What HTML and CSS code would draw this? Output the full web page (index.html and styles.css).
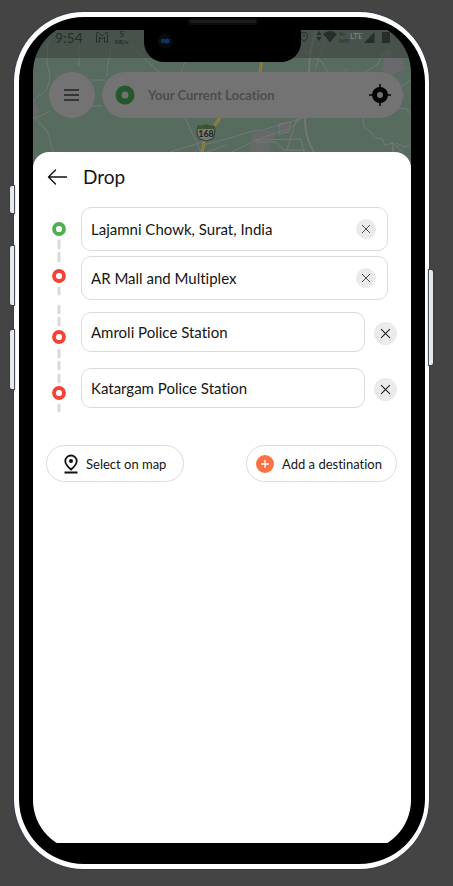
FILE: index.html
```html
<!DOCTYPE html>
<html lang="en">
<head>
<meta charset="utf-8">
<meta name="viewport" content="width=device-width, initial-scale=1">
<title>Drop</title>
<link rel="stylesheet" href="styles.css">
</head>
<body>
<div class="phone">
  <span class="key key-mute"></span>
  <span class="key key-up"></span>
  <span class="key key-down"></span>
  <span class="key key-power"></span>
  <div class="notch">
    <span class="speaker"></span>
    <svg class="camera" viewBox="0 0 16 16" aria-hidden="true"><circle cx="8" cy="8" r="7.5" fill="#080a0c"/><circle cx="6" cy="8" r="2.500" fill="#0d3446"/><circle cx="10" cy="8" r="2.500" fill="#15307a"/></svg>
  </div>
  <main class="screen">
    <div class="view">
      <svg class="map" viewBox="33 30 378 140" preserveAspectRatio="xMidYMin slice" aria-hidden="true">
        <rect x="0" y="30" width="453" height="140" fill="#586b5f"/>
        <g fill="#67696a">
          <path d="M33 98l5 8 2 5-4 5-3-1zM252 134l8-3 11-1 5-1-2 9-4 6-2 8h-17zM341 71l5-4 3 4zM384 52l4-4 7 9 7 1 3 12-11 4-5 5-7-10zM279 123l6-1 5 2-1 9-8-1zM400 90l6 4-3 6-5-2z"/>
        </g>
        <g fill="none" stroke="#737875" stroke-width="1">
          <path d="M79 45v21M50 40c-5 7-1 11-3 18-1 9 6 17 1 27-1 10-9 8-15 16M33 116l13 14c5 6 3 13 8 22M33 118c8-1 10-4 17-7M111 44c0 10-5 22-4 32M120 35l40 38M92 80h13M90 106h12M185 62l-4 10M185 118l16 34M203 145l23-6M170 152l42-13M207 152l20-7"/>
          <path d="M226 139c14-3 24-9 37-9l40-12M232 152l24-12 35-12 10-10M256 140l45-1 3 13M279 124v10l10-2 2-10zM297 118l-10 32M304 50l18 12 6 10M363 118l1 9 8 6 2 5 8 1 3 6 8-2v9M403 152l-11-10 1 10M411 145l-7 2-8-4M365 72l13-8 5-10 8-4M411 80l-9 6M396 100l3 9 7-1 5 7M255 142h20l9 8h22"/>
        </g>
        <path d="M316 31l-5 17c-2 10-1 16-2 24M305 118c0 14 2 22 9 34" fill="none" stroke="#737675" stroke-width="2"/>
        <path d="M326 36l-11 34" fill="none" stroke="#737675"/>
        <path d="M262 60l-2 12M220 118l-15 20-3 14" fill="none" stroke="#8c834f" stroke-width="3"/>
        <path d="M262 60l-2 12M220 118l-15 20-3 14" fill="none" stroke="#8f701f" stroke-width="1"/>
        <path d="M198 126q4 1 8-1 4 2 8 1l1 4q-1 9-3 9l-6 2-6-2q-3-1-3-9z" fill="#777a75" stroke="#30382c"/>
        <path d="M198 126q4 1 8-1 4 2 8 1l1 3h-18z" fill="#3a582b"/>
        <text x="206" y="137" class="shield">168</text>
      </svg>
      <header class="status">
        <span class="clock">9:54</span>
        <svg class="mail" viewBox="0 0 14 12" aria-hidden="true"><path d="M1.500 11V2.500Q1.500 0 3.500 2L7 5l3.500-3q2-2 2 .500V11H9.500V6L7 8 4.500 6v5z" fill="none" stroke="currentColor"/></svg>
        <span class="rate"><b>5</b><small>KB/s</small></span>
        <svg class="signals" viewBox="301 31 90 14" aria-hidden="true">
          <g fill="#272e29">
            <path d="M304 32a3.500 3.500 0 0 1 3.500 3.500q0 3-3.500 6.500-3.500-3.500-3.500-6.500a3.500 3.500 0 0 1 3.500-3.500z" fill="none" stroke="#272e29"/><circle cx="304" cy="35.500" r="1"/>
            <path d="M319 31l2.500 4h-5zM319 41l2.500-4h-5z"/>
            <path d="M323 34q7-6 14 0l-7 8.500z"/>
            <path d="M364 43h10.500V32z"/>
            <path d="M382 32h8v11h-8z"/>
          </g>
          <g fill="#303832"><text x="339" y="36" class="vo">Vo</text><text x="339" y="43" class="vo">WiFi</text></g>
          <text x="350" y="39" class="lte">LTE</text>
        </svg>
      </header>
      <div class="search-row">
        <button class="menu" type="button" aria-label="Menu"><svg viewBox="0 0 16 12" aria-hidden="true"><path d="M0 1h15M0 6h15M0 11h15" stroke="#222" stroke-width="1.500"/></svg></button>
        <div class="search">
          <svg class="origin" viewBox="0 0 20 20" aria-hidden="true"><circle cx="10" cy="10" r="6.500" fill="none" stroke="#23582a" stroke-width="6"/></svg>
          <input class="where" type="text" placeholder="Your Current Location" aria-label="Your Current Location">
          <button class="locate" type="button" aria-label="Use my location"><svg viewBox="0 0 22 22" aria-hidden="true"><circle cx="11" cy="11" r="5.500" fill="none" stroke="#050505" stroke-width="5"/><path d="M11 0v4M11 18v4M0 11h4M18 11h4" stroke="#050505" stroke-width="1.500"/></svg></button>
        </div>
      </div>
      <section class="sheet">
        <div class="title">
          <button class="back" type="button" aria-label="Back"><svg viewBox="0 0 20 16" aria-hidden="true"><path d="M19 8H1M8 1L1 8l7 7" fill="none" stroke="#111" stroke-width="1.400" stroke-linecap="round" stroke-linejoin="round"/></svg></button>
          <h1>Drop</h1>
        </div>
        <div class="route">
          <svg class="track" viewBox="0 0 14 206" aria-hidden="true">
            <path d="M7 34v7M7 46v8M7 81v6M7 99v7M7 111v7M7 143v7M7 155v7M7 168v7M7 198v6" stroke="#dadada" stroke-width="3" stroke-linecap="round"/>
            <g fill="none" stroke-width="3.800"><circle cx="7" cy="22" r="5" stroke="#4caf50"/><g stroke="#f44336"><circle cx="7" cy="69" r="5"/><circle cx="7" cy="130" r="5"/><circle cx="7" cy="186" r="5"/></g></g>
          </svg>
          <div class="stops">
            <div class="stop boxed"><input type="text" value="Lajamni Chowk, Surat, India" aria-label="Pickup"><button class="clear" type="button" aria-label="Clear pickup"><svg viewBox="0 0 10 10" aria-hidden="true"><path d="M1 1l8 8M9 1l-8 8" stroke="#47505f"/></svg></button></div>
            <div class="stop boxed"><input type="text" value="AR Mall and Multiplex" aria-label="First stop"><button class="clear" type="button" aria-label="Clear first stop"><svg viewBox="0 0 10 10" aria-hidden="true"><path d="M1 1l8 8M9 1l-8 8" stroke="#47505f"/></svg></button></div>
            <div class="stop extra"><input type="text" value="Amroli Police Station" aria-label="Second stop"><button class="remove" type="button" aria-label="Remove second stop"><svg viewBox="0 0 10 10" aria-hidden="true"><path d="M1 1l8 8M9 1l-8 8" stroke="#222"/></svg></button></div>
            <div class="stop extra"><input type="text" value="Katargam Police Station" aria-label="Third stop"><button class="remove" type="button" aria-label="Remove third stop"><svg viewBox="0 0 10 10" aria-hidden="true"><path d="M1 1l8 8M9 1l-8 8" stroke="#222"/></svg></button></div>
          </div>
        </div>
        <div class="actions">
          <button class="pill pill-map" type="button"><svg viewBox="0 0 14 20" aria-hidden="true"><path d="M7 1.500a5.700 5.700 0 0 1 5.700 5.700q0 3.500-5.700 8.300-5.700-4.800-5.700-8.300A5.700 5.700 0 0 1 7 1.500zM.5 18.500h13" fill="none" stroke="#111" stroke-width="1.800"/><circle cx="7" cy="7" r="2" fill="#111"/></svg>Select on map</button>
          <button class="pill pill-add" type="button"><svg viewBox="0 0 18 18" aria-hidden="true"><circle cx="9" cy="9" r="9" fill="#ff7043"/><path d="M9 5v8M5 9h8" stroke="#fff" stroke-width="1.300"/></svg>Add a destination</button>
        </div>
      </section>
    </div>
  </main>
</div>
</body>
</html>
```
FILE: styles.css
```css
* { box-sizing: border-box; }
body {
  margin: 0;
  min-height: 100vh;
  padding: 12px 24px 17px 14px;
  display: flex;
  background: #444;
  font-family: Lato, "Liberation Sans", sans-serif;
  font-variant-ligatures: none;
  color: #151515;
}
button, input { font: inherit; font-variant-ligatures: none; color: inherit; padding: 0; border: 0; background: none; }
button { display: flex; align-items: center; justify-content: center; flex: none; }
svg { display: block; flex: none; }

.phone {
  position: relative;
  flex: 1;
  min-width: 0;
  display: flex;
  padding: 5px 14px 13px;
  border: 5px solid #fff;
  border-right-width: 4px;
  border-radius: 70px;
  background: #000;
  box-shadow: 0 0 1px 1px #35404e;
}
.key { position: absolute; left: -9px; width: 4px; background: #e9e9ec; border-radius: 2px 0 0 2px; box-shadow: 0 0 1px 1px #35404e; }
.key-mute { top: 169px; height: 27px; }
.key-up { top: 229px; height: 59px; }
.key-down { top: 313px; height: 59px; }
.key-power { top: 253px; height: 95px; left: auto; right: -8px; border-radius: 0 2px 2px 0; }

.notch {
  position: absolute;
  z-index: 2;
  top: 0;
  left: calc(50% - 78px);
  width: 157px;
  height: 45px;
  background: #000;
  border-radius: 0 0 20px 20px;
}
.speaker { position: absolute; top: 1px; left: 44px; width: 70px; height: 7px; border: 2px solid #0b0b0b; border-radius: 3px; background: #1c1c1c; }
.camera { position: absolute; top: 16px; left: 13px; width: 16px; height: 16px; }

.screen {
  flex: 1;
  min-width: 0;
  display: flex;
  padding: 8px 0;
  border-radius: 51px;
  overflow: hidden;
  background: #000;
}
.view { position: relative; flex: 1; min-width: 0; display: flex; flex-direction: column; }
.map { position: absolute; top: 0; left: 0; width: 100%; height: 140px; }
.shield { font: bold 9px Lato, sans-serif; fill: #222; text-anchor: middle; }

.status {
  position: relative;
  display: flex;
  gap: 6px;
  height: 28px;
  padding: 0 20px 0 22px;
  background: rgba(52, 57, 53, .5);
  color: #272e29;
}
.clock { font-size: 14px; line-height: 16px; }
.mail { width: 14px; height: 12px; margin: 1px 0 0 6px; }
.rate { display: flex; flex-direction: column; align-items: center; line-height: 8px; font-size: 8px; }
.rate small { font-size: 6px; font-weight: bold; }
.signals { width: 90px; height: 14px; margin: 1px 0 0 auto; }
.vo { font: bold 5px Lato, sans-serif; }
.lte { font: 8px Lato, sans-serif; fill: #858a86; }

.search-row { position: relative; display: flex; gap: 7px; padding: 14px 8px 34px 16px; }
.menu { width: 46px; height: 46px; border-radius: 50%; background: #737373; }
.menu svg { width: 16px; height: 12px; }
.search { flex: 1; min-width: 0; height: 46px; display: flex; align-items: center; border-radius: 23px; padding: 0 12px 0 13px; background: #737373; }
.origin { width: 20px; height: 20px; }
.where { flex: 1; min-width: 0; margin-left: 13px; font-size: 13px; font-weight: bold; outline: 0; }
.where::placeholder { color: #4d4d4d; opacity: 1; }
.locate svg { width: 22px; height: 22px; }

.sheet { position: relative; flex: 1; border-radius: 16px 16px 0 0; background: #fff; padding: 13px 14px 24px; }
.title { display: flex; align-items: center; gap: 15px; height: 24px; }
.back svg { width: 21px; height: 16px; }
h1 { margin: 0; font-size: 19px; line-height: 24px; font-weight: normal; }

.route { display: flex; gap: 15px; padding-left: 5px; margin-top: 18px; }
.track { width: 14px; height: 206px; }
.stops { flex: 1; min-width: 0; display: flex; flex-direction: column; }
.stop { display: flex; align-items: center; font-size: 15px; }
.stop input { flex: 1; min-width: 0; padding-left: 9px; outline: 0; }
.boxed { height: 44px; margin: 0 9px 5px 0; padding-right: 11px; border: 1px solid #dcdcdc; border-radius: 10px; }
.extra { margin-top: 7px; margin-bottom: 9px; gap: 9px; }
.extra input { height: 40px; border: 1px solid #dcdcdc; border-radius: 10px; }
.clear, .remove { border-radius: 50%; background: #ebebeb; }
.clear { width: 20px; height: 20px; }
.clear svg { width: 10px; height: 10px; }
.remove { width: 23px; height: 23px; margin-top: 3px; }
.remove svg { width: 11px; height: 11px; }

.actions { display: flex; justify-content: space-between; margin: 28px 0 0 -1px; }
.pill { height: 37px; border: 1px solid #dcdcdc; border-radius: 19px; font-size: 13px; gap: 8px; }
.pill svg { height: 20px; }
.pill-map { padding: 0 17px; }
.pill-add { padding: 0 14px 0 9px; }
.pill-add svg { width: 18px; height: 18px; }
```
